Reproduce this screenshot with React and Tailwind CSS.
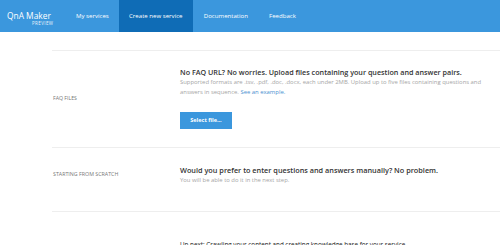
export default function App() {
  const font = { fontFamily: '"Open Sans", "Noto Sans", sans-serif' };
  return (
    <div className="w-[500px] h-[245px] overflow-hidden bg-white" style={font}>
      <header className="flex h-[32px] bg-[#3b97dd] text-white">
        <div className="flex flex-col pl-[7px] pt-[11px] w-[66px]">
          <span className="text-[8.4px] leading-[10px] whitespace-nowrap">QnA Maker</span>
          <span className="text-[4.5px] leading-[5px] pl-[25px] tracking-[0.4px] opacity-90">PREVIEW</span>
        </div>
        <nav className="flex text-[6.1px]">
          <a className="flex items-center px-[10px] whitespace-nowrap">My services</a>
          <a className="flex items-center px-[10px] w-[74px] justify-center bg-[#0f6cb6] whitespace-nowrap">Create new service</a>
          <a className="flex items-center pl-[11px] whitespace-nowrap">Documentation</a>
          <a className="flex items-center pl-[21px] whitespace-nowrap">Feedback</a>
        </nav>
      </header>
      <main className="ml-[52px] mt-[18px]">
        <section className="grid grid-cols-[128px_1fr] border-t border-[#eeeeee] pt-[17px] pb-[18px]">
          <div className="flex items-center pl-[1px] text-[5.2px] text-[#777] uppercase">FAQ files</div>
          <div>
            <h2 className="text-[7.2px] leading-[9px] font-semibold text-[#333] whitespace-nowrap">No FAQ URL? No worries. Upload files containing your question and answer pairs.</h2>
            <p className="text-[5.9px] leading-[10px] text-[#a5a5a5] w-[310px]">
              Supported formats are .tsv, .pdf, .doc, .docx, each under 2MB. Upload up to five files containing questions and answers in sequence. <a className="text-[#4a90d0]">See an example.</a>
            </p>
            <button className="mt-[15px] w-[52px] h-[17px] bg-[#3b97dd] text-white text-[5.5px] font-bold">Select file...</button>
          </div>
        </section>
        <section className="grid grid-cols-[128px_1fr] border-t border-[#eeeeee] pt-[17px] pb-[26px]">
          <div className="flex items-center pl-[1px] text-[5.3px] text-[#777] uppercase">Starting from scratch</div>
          <div>
            <h2 className="text-[7.3px] leading-[10px] font-semibold text-[#333] whitespace-nowrap">Would you prefer to enter questions and answers manually? No problem.</h2>
            <p className="text-[5.9px] leading-[10px] text-[#a5a5a5]">You will be able to do it in the next step.</p>
          </div>
        </section>
        <section className="grid grid-cols-[128px_1fr] border-t border-[#eeeeee] pt-[28px]">
          <div></div>
          <p className="text-[6.3px] leading-[10px] text-[#222] whitespace-nowrap">Up next: Crawling your content and creating knowledge base for your service.</p>
        </section>
      </main>
    </div>
  );
}
